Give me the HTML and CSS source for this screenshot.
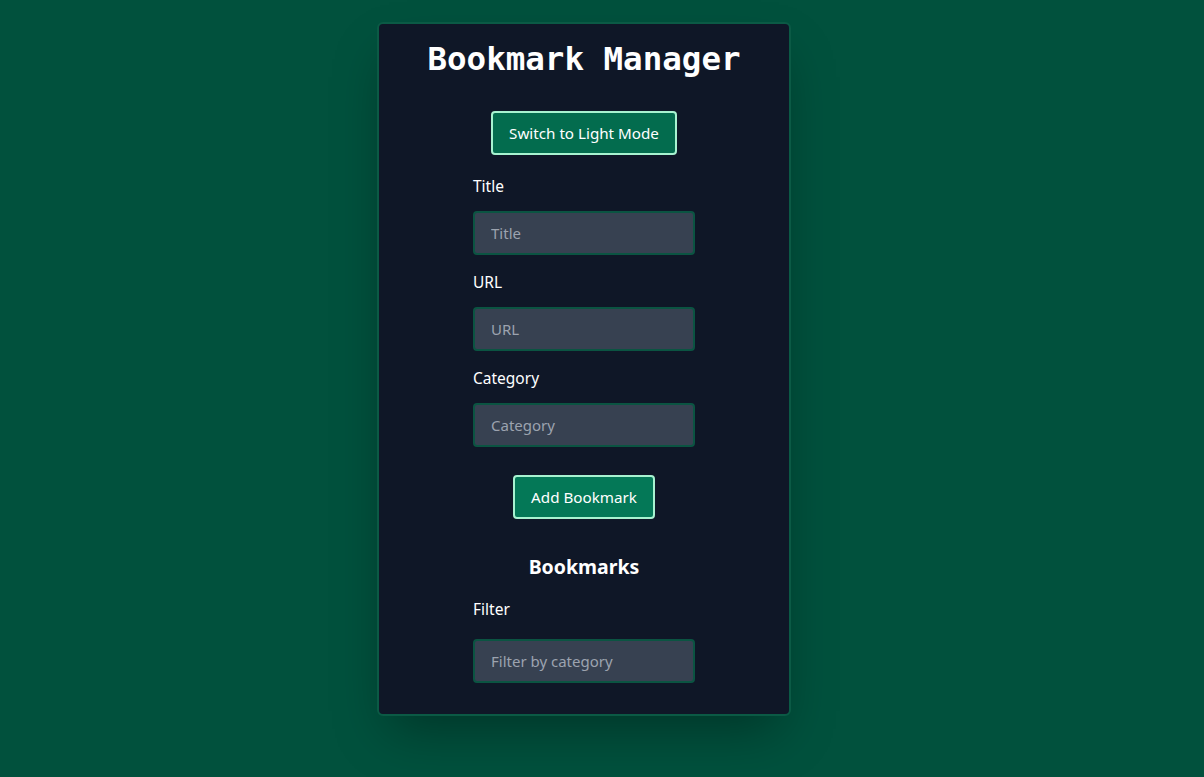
FILE: index.html
```html
<!DOCTYPE html>
<html lang="en">
<head>
<meta charset="utf-8">
<title>Bookmark Manager</title>
<link rel="stylesheet" href="styles.css">
</head>
<body>
<div class="page">
  <main class="card">
    <h1 class="title">Bookmark Manager</h1>
    <div class="center toggle">
      <button class="btn btn-toggle">Switch to Light Mode</button>
    </div>
    <form class="form">
      <div class="field">
        <label class="label" for="t">Title</label>
        <input class="input" id="t" type="text" placeholder="Title">
      </div>
      <div class="field">
        <label class="label" for="u">URL</label>
        <input class="input" id="u" type="text" placeholder="URL">
      </div>
      <div class="field">
        <label class="label" for="c">Category</label>
        <input class="input" id="c" type="text" placeholder="Category">
      </div>
      <div class="center add">
        <button class="btn" type="button">Add Bookmark</button>
      </div>
    </form>
    <h2 class="subtitle">Bookmarks</h2>
    <div class="form filter">
      <div class="field">
        <label class="label" for="f">Filter</label>
        <input class="input" id="f" type="text" placeholder="Filter by category">
      </div>
    </div>
  </main>
</div>
</body>
</html>
```

FILE: styles.css
```css
* { box-sizing: border-box; }
html, body { margin: 0; padding: 0; }
body {
  background: #01513d;
  font-family: "Noto Sans", "Open Sans", sans-serif;
  color: #ffffff;
  min-height: 777px;
}
.page {
  display: flex;
  justify-content: center;
  padding: 22px 36px 0 0;
}
.card {
  width: 414px;
  background: #0f1727;
  border: 2px solid #0b5a45;
  border-radius: 6px;
  padding: 15px 0 31px;
  box-shadow: 0 25px 50px -12px rgba(0, 0, 0, 0.35);
}
.title {
  margin: 0;
  text-align: center;
  font-family: "DejaVu Sans Mono", "Liberation Mono", monospace;
  font-weight: 700;
  font-size: 32.5px;
  line-height: 40px;
}
.center {
  display: flex;
  justify-content: center;
}
.toggle { margin-top: 32px; }
.btn {
  font-family: inherit;
  font-size: 15.2px;
  line-height: 24px;
  color: #ffffff;
  background: #047857;
  border: 2px solid #a7f3d0;
  border-radius: 4px;
  padding: 8px 16px;
  height: 44px;
}
.btn-toggle { background: #036c4e; }
.form {
  width: 222px;
  margin: 0 auto;
  display: flex;
  flex-direction: column;
}
.field {
  display: flex;
  flex-direction: column;
  margin-top: 15px;
}
.form .field:first-child { margin-top: 19px; }
.label {
  font-size: 15.5px;
  line-height: 24px;
  margin-bottom: 13px;
}
.input {
  height: 44px;
  background: #374151;
  border: 2px solid #0b5442;
  border-radius: 4px;
  padding: 0 16px;
  font-family: inherit;
  font-size: 15px;
  color: #ffffff;
  outline: none;
}
.input::placeholder { color: #9ca3af; }
.add { margin-top: 28px; }
.subtitle {
  margin: 34px 0 0;
  text-align: center;
  font-size: 19.5px;
  line-height: 28px;
  font-weight: 700;
}
.form.filter .field:first-child { margin-top: 16px; }
.filter .label { margin-bottom: 18px; }
```
